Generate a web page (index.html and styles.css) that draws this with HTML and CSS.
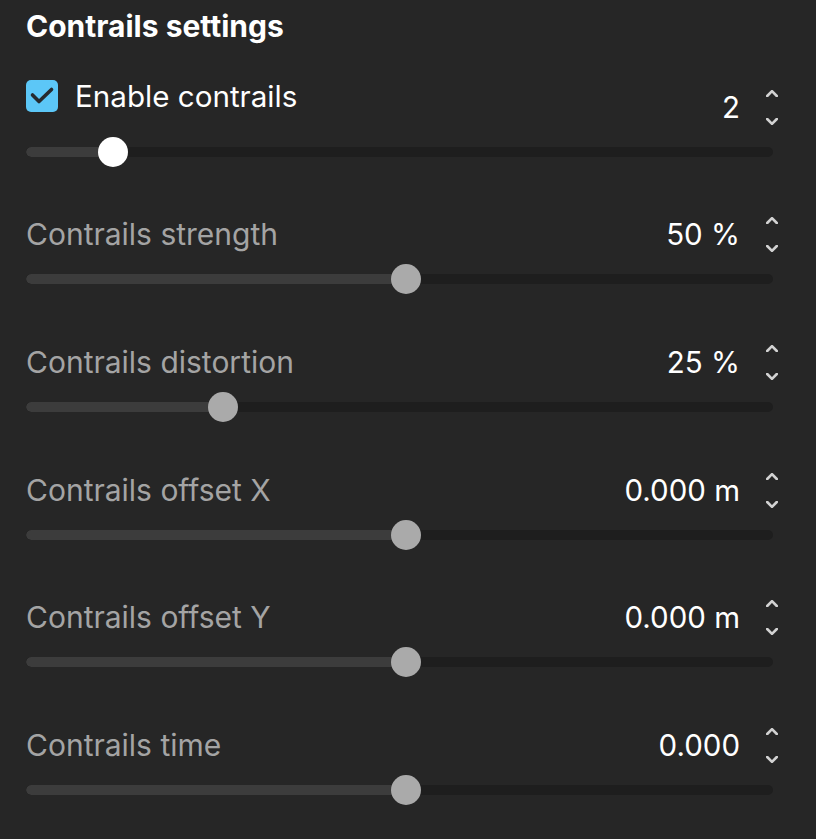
FILE: index.html
```html
<!DOCTYPE html>
<html>
<head>
<meta charset="utf-8">
<link rel="stylesheet" href="styles.css">
</head>
<body>
<div class="panel">
  <h1 class="title">Contrails settings</h1>

  <div class="row">
    <div class="header">
      <label class="check-label">
        <span class="checkbox"><svg viewBox="0 0 32 32" width="32" height="32"><path d="M6.5 15 L13 21.5 L25.5 9.5" fill="none" stroke="#262a2e" stroke-width="3.6" stroke-linecap="round" stroke-linejoin="round"/></svg></span>
        <span class="check-text">Enable contrails</span>
      </label>
      <div class="value-box">
        <span class="value">2</span>
        <span class="spinner">
          <svg class="chev" viewBox="0 0 12 7" width="12" height="7"><path d="M1.2 6 L6 1.2 L10.8 6" fill="none" stroke="#d2d2d2" stroke-width="2.6" stroke-linecap="round" stroke-linejoin="round"/></svg>
          <svg class="chev" viewBox="0 0 12 7" width="12" height="7"><path d="M1.2 1 L6 5.8 L10.8 1" fill="none" stroke="#d2d2d2" stroke-width="2.6" stroke-linecap="round" stroke-linejoin="round"/></svg>
        </span>
      </div>
    </div>
    <div class="slider">
      <div class="track"><div class="fill" style="width: 87px"></div></div>
      <div class="thumb thumb-white" style="left: 72px"></div>
    </div>
  </div>

  <div class="row">
    <div class="header">
      <span class="label">Contrails strength</span>
      <div class="value-box">
        <span class="value">50 %</span>
        <span class="spinner">
          <svg class="chev" viewBox="0 0 12 7" width="12" height="7"><path d="M1.2 6 L6 1.2 L10.8 6" fill="none" stroke="#d2d2d2" stroke-width="2.6" stroke-linecap="round" stroke-linejoin="round"/></svg>
          <svg class="chev" viewBox="0 0 12 7" width="12" height="7"><path d="M1.2 1 L6 5.8 L10.8 1" fill="none" stroke="#d2d2d2" stroke-width="2.6" stroke-linecap="round" stroke-linejoin="round"/></svg>
        </span>
      </div>
    </div>
    <div class="slider">
      <div class="track"><div class="fill" style="width: 380px"></div></div>
      <div class="thumb" style="left: 365px"></div>
    </div>
  </div>

  <div class="row">
    <div class="header">
      <span class="label">Contrails distortion</span>
      <div class="value-box">
        <span class="value">25 %</span>
        <span class="spinner">
          <svg class="chev" viewBox="0 0 12 7" width="12" height="7"><path d="M1.2 6 L6 1.2 L10.8 6" fill="none" stroke="#d2d2d2" stroke-width="2.6" stroke-linecap="round" stroke-linejoin="round"/></svg>
          <svg class="chev" viewBox="0 0 12 7" width="12" height="7"><path d="M1.2 1 L6 5.8 L10.8 1" fill="none" stroke="#d2d2d2" stroke-width="2.6" stroke-linecap="round" stroke-linejoin="round"/></svg>
        </span>
      </div>
    </div>
    <div class="slider">
      <div class="track"><div class="fill" style="width: 197px"></div></div>
      <div class="thumb" style="left: 182px"></div>
    </div>
  </div>

  <div class="row">
    <div class="header">
      <span class="label">Contrails offset X</span>
      <div class="value-box">
        <span class="value">0.000 m</span>
        <span class="spinner">
          <svg class="chev" viewBox="0 0 12 7" width="12" height="7"><path d="M1.2 6 L6 1.2 L10.8 6" fill="none" stroke="#d2d2d2" stroke-width="2.6" stroke-linecap="round" stroke-linejoin="round"/></svg>
          <svg class="chev" viewBox="0 0 12 7" width="12" height="7"><path d="M1.2 1 L6 5.8 L10.8 1" fill="none" stroke="#d2d2d2" stroke-width="2.6" stroke-linecap="round" stroke-linejoin="round"/></svg>
        </span>
      </div>
    </div>
    <div class="slider">
      <div class="track"><div class="fill" style="width: 380px"></div></div>
      <div class="thumb" style="left: 365px"></div>
    </div>
  </div>

  <div class="row">
    <div class="header">
      <span class="label">Contrails offset Y</span>
      <div class="value-box">
        <span class="value">0.000 m</span>
        <span class="spinner">
          <svg class="chev" viewBox="0 0 12 7" width="12" height="7"><path d="M1.2 6 L6 1.2 L10.8 6" fill="none" stroke="#d2d2d2" stroke-width="2.6" stroke-linecap="round" stroke-linejoin="round"/></svg>
          <svg class="chev" viewBox="0 0 12 7" width="12" height="7"><path d="M1.2 1 L6 5.8 L10.8 1" fill="none" stroke="#d2d2d2" stroke-width="2.6" stroke-linecap="round" stroke-linejoin="round"/></svg>
        </span>
      </div>
    </div>
    <div class="slider">
      <div class="track"><div class="fill" style="width: 380px"></div></div>
      <div class="thumb" style="left: 365px"></div>
    </div>
  </div>

  <div class="row">
    <div class="header">
      <span class="label">Contrails time</span>
      <div class="value-box">
        <span class="value">0.000</span>
        <span class="spinner">
          <svg class="chev" viewBox="0 0 12 7" width="12" height="7"><path d="M1.2 6 L6 1.2 L10.8 6" fill="none" stroke="#d2d2d2" stroke-width="2.6" stroke-linecap="round" stroke-linejoin="round"/></svg>
          <svg class="chev" viewBox="0 0 12 7" width="12" height="7"><path d="M1.2 1 L6 5.8 L10.8 1" fill="none" stroke="#d2d2d2" stroke-width="2.6" stroke-linecap="round" stroke-linejoin="round"/></svg>
        </span>
      </div>
    </div>
    <div class="slider">
      <div class="track"><div class="fill" style="width: 380px"></div></div>
      <div class="thumb" style="left: 365px"></div>
    </div>
  </div>
</div>
</body>
</html>
```

FILE: styles.css
```css
html, body {
  margin: 0;
  padding: 0;
  background: #262626;
}

body {
  font-family: Inter, "Noto Sans", sans-serif;
  color: #ffffff;
  width: 816px;
  height: 839px;
  overflow: hidden;
}

.panel {
  padding: 8px 0 0 26px;
  width: 762px;
  display: flex;
  flex-direction: column;
}

.title {
  margin: 0;
  font-size: 30px;
  font-weight: 700;
  line-height: 36px;
  color: #ffffff;
  margin-bottom: 40.5px;
}

.row {
  display: flex;
  flex-direction: column;
  gap: 8px;
  margin-bottom: 45.7px;
}

.header {
  display: flex;
  align-items: center;
  justify-content: space-between;
  height: 44px;
}

.label {
  font-size: 30px;
  color: #a4a4a4;
  line-height: 36px;
}

.check-label {
  display: flex;
  align-items: center;
  gap: 17px;
  align-self: flex-start;
  margin-top: -4.5px;
}

.checkbox {
  width: 32px;
  height: 32px;
  border-radius: 5px;
  background: #5cc7f7;
  display: flex;
}

.check-text {
  font-size: 29.6px;
  color: #ffffff;
  line-height: 32px;
}

.value-box {
  display: flex;
  align-items: center;
  gap: 16px;
}

.value {
  font-size: 29.5px;
  line-height: 36px;
  color: #ffffff;
}

.spinner {
  width: 32px;
  height: 44px;
  display: flex;
  flex-direction: column;
  align-items: center;
  justify-content: space-between;
  padding: 5px 0 4px;
  box-sizing: border-box;
}

.chev {
  display: block;
}

.slider {
  position: relative;
  width: 747px;
  height: 30px;
  display: flex;
  align-items: center;
}

.track {
  width: 100%;
  height: 10px;
  border-radius: 5px;
  background: #1e1e1e;
  overflow: hidden;
}

.fill {
  height: 100%;
  background: #3c3c3c;
  border-radius: 5px 0 0 5px;
}

.thumb {
  position: absolute;
  top: 0;
  width: 30px;
  height: 30px;
  border-radius: 50%;
  background: #aaaaaa;
}

.thumb-white {
  background: #ffffff;
}
```
